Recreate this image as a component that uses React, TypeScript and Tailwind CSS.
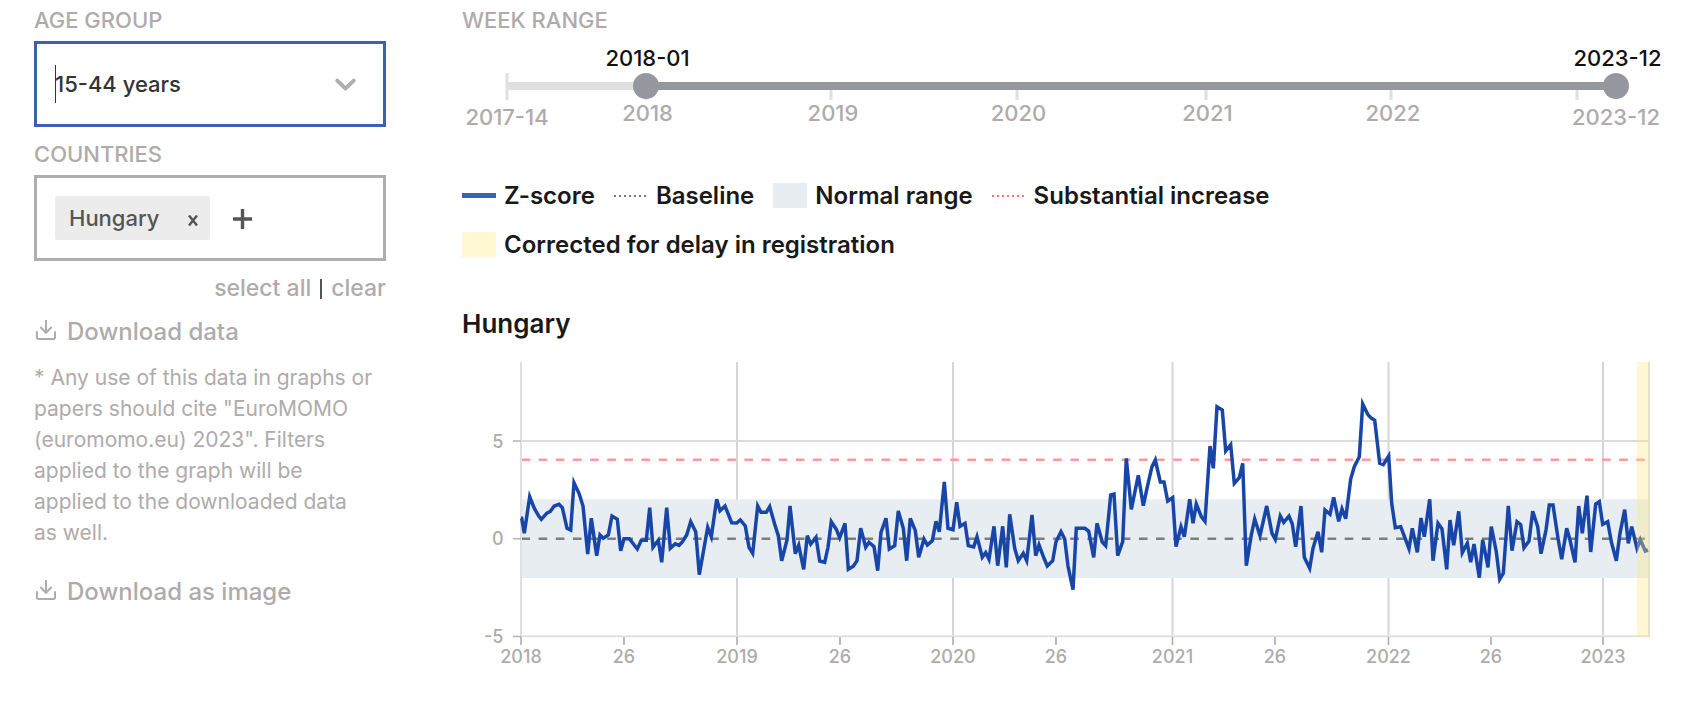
import { useState } from "react";

type Segment = { ox: number; oy: number; points: [number, number][] };

const LAST_WEEK = 311;

const yearTicks = [
  { label: "2018", week: 39 },
  { label: "2019", week: 91 },
  { label: "2020", week: 143 },
  { label: "2021", week: 196 },
  { label: "2022", week: 248 },
  { label: "", week: 300 },
];

// Each segment has its own origin; points are in thirds of a chart unit.
const segments: Segment[] = [
  {
    ox: 48,
    oy: 110,
    points: [
      [33, 175], [35, 175], [43, 220], [59, 110], [72, 143], [86, 168], [94, 178], [110, 160], [121, 154], [133, 138],
      [147, 133], [157, 143], [171, 205], [182, 210], [192, 68], [207, 100], [219, 138], [233, 282], [244, 175],
      [260, 287], [270, 225], [280, 235], [295, 225], [306, 168], [322, 178], [332, 272], [342, 236], [358, 236],
      [382, 267], [394, 241], [409, 241], [419, 143], [429, 262], [445, 241], [455, 307], [470, 143], [481, 265],
      [496, 251], [507, 256], [517, 246], [530, 225], [542, 185], [557, 215], [568, 344],
    ],
  },
  {
    ox: 238,
    oy: 90,
    points: [
      [23, 262], [34, 290], [50, 178], [60, 212], [75, 198], [95, 248], [110, 249], [121, 240], [136, 258],
      [147, 322], [158, 340], [173, 198], [183, 217], [199, 217], [209, 200], [224, 253], [235, 287], [245, 362],
      [261, 300], [270, 198], [286, 341], [296, 316], [311, 388], [322, 287], [332, 312], [348, 292], [359, 363],
      [374, 367], [384, 322], [394, 245], [409, 268], [419, 293], [435, 250], [445, 388], [460, 379], [471, 362],
      [482, 265], [497, 322], [507, 307], [522, 320], [533, 392], [543, 277], [558, 235], [568, 327], [584, 317],
      [595, 213], [610, 265], [620, 362], [631, 235], [646, 272], [656, 352], [672, 297], [682, 315], [697, 302],
    ],
  },
  {
    ox: 468,
    oy: 90,
    points: [
      [18, 244], [28, 275], [43, 126], [54, 265], [69, 269], [80, 187], [90, 259], [105, 250], [115, 317],
      [131, 321], [141, 290], [157, 352], [167, 338], [177, 358], [192, 259], [203, 377], [218, 259], [229, 382],
      [239, 223], [254, 325], [265, 362], [280, 340], [290, 362], [306, 225], [317, 347], [327, 315], [342, 355],
      [352, 378], [368, 362], [378, 305], [393, 275], [404, 297], [414, 378], [429, 449], [439, 265], [465, 265],
      [476, 274], [491, 352], [501, 250], [517, 306], [527, 317], [542, 165], [552, 162], [563, 347], [578, 305],
      [589, 55], [604, 208], [625, 106], [640, 197], [655, 127], [666, 80], [676, 60], [691, 126], [702, 126],
      [713, 183], [728, 173],
    ],
  },
  {
    ox: 648,
    oy: 30,
    points: [
      [198, 500], [213, 440], [223, 470], [239, 358], [249, 430], [259, 372], [274, 410], [285, 424], [300, 198],
      [310, 265], [321, 80], [337, 90], [347, 213], [362, 194], [373, 310], [388, 293], [398, 250], [409, 557],
      [424, 465], [434, 417], [450, 467], [470, 378], [486, 460], [496, 478], [511, 408], [521, 427], [537, 408],
      [547, 432], [557, 500], [573, 378], [583, 532], [599, 565], [609, 505], [624, 455], [635, 517], [645, 390],
      [660, 403], [671, 352], [686, 424],
    ],
  },
  {
    ox: 838,
    oy: 30,
    points: [
      [126, 387], [137, 416], [152, 297], [163, 260], [178, 230], [188, 72], [203, 103], [213, 114], [224, 121],
      [239, 250], [250, 254], [266, 228], [275, 370], [286, 443], [302, 440], [327, 506], [337, 445], [352, 517],
      [363, 414], [373, 470], [389, 358], [399, 542], [414, 430], [426, 447], [440, 568], [450, 420], [461, 496],
      [476, 394], [487, 518], [502, 490], [512, 547], [522, 492], [538, 593], [548, 480], [564, 562], [574, 440],
      [589, 515], [599, 598], [610, 580], [625, 378], [636, 512], [651, 425],
    ],
  },
  {
    ox: 998,
    oy: 0,
    points: [
      [182, 524], [192, 593], [207, 573], [218, 484], [233, 530], [243, 611], [258, 540], [268, 465], [279, 465],
      [294, 565], [305, 628], [320, 535], [330, 570], [345, 637], [356, 468], [367, 550], [381, 437], [392, 606],
      [407, 462], [418, 455], [428, 523], [443, 515], [454, 575], [469, 632], [480, 550], [494, 479], [505, 580],
      [515, 530], [531, 595], [541, 569], [556, 603], [564, 600],
    ],
  },
];

const linePoints = segments
  .flatMap((s) => s.points.map(([x, y]) => `${(s.ox + x / 3).toFixed(1)},${(s.oy + y / 3).toFixed(1)}`))
  .join(" ");

const xTicks = [
  { x: 59, label: "2018", year: true },
  { x: 162, label: "26", year: false },
  { x: 275, label: "2019", year: true },
  { x: 378, label: "26", year: false },
  { x: 491, label: "2020", year: true },
  { x: 594, label: "26", year: false },
  { x: 710.5, label: "2021", year: true },
  { x: 813, label: "26", year: false },
  { x: 926.5, label: "2022", year: true },
  { x: 1029, label: "26", year: false },
  { x: 1141, label: "2023", year: true },
];

const yTicks = [
  { y: 91, label: "5" },
  { y: 188.7, label: "0" },
  { y: 286.5, label: "-5" },
];

function DownloadIcon() {
  return (
    <svg viewBox="0 0 22 22" className="mb-1 size-[22px] shrink-0" fill="none" stroke="currentColor" strokeWidth="2" aria-hidden="true">
      <path d="M12 1v12.6M6.4 8l5.6 5.7L17.6 8" />
      <path d="M2.9 12.2v6q0 1.7 1.7 1.7h14.8q1.7 0 1.7-1.7v-6" />
    </svg>
  );
}

function Chart() {
  return (
    <svg viewBox="0 0 1200 330" className="block h-auto w-full" role="img" aria-label="Z-score by week, Hungary">
      <g stroke="#d6d6d6" strokeWidth="2">
        {xTicks.filter((t) => t.year && t.x > 59).map((t) => (
          <line key={t.x} x1={t.x} x2={t.x} y1="12" y2="286" />
        ))}
        <line x1="59" x2="1187" y1="91" y2="91" stroke="#dcdcdc" />
      </g>
      <rect x="59" y="149.3" width="1128" height="78.7" fill="#e8edf1" />
      <line x1="59.5" x2="1187" y1="109.7" y2="109.7" stroke="#ff9999" strokeWidth="2.6" strokeDasharray="8.6 8.55" />
      <line x1="59.5" x2="1187" y1="188.7" y2="188.7" stroke="#7d7d7d" strokeWidth="2.6" strokeDasharray="8.6 8.55" />
      <g stroke="#e0e0e0" strokeWidth="2">
        <line x1="59" x2="59" y1="12" y2="287" />
        <line x1="1187" x2="1187" y1="12" y2="287" />
        <line x1="58" x2="1188" y1="286.3" y2="286.3" />
      </g>
      <polyline points={linePoints} fill="none" stroke="#1746a8" strokeWidth="3.5" />
      <rect x="1175" y="12" width="12.5" height="275" fill="#ffe87e" fillOpacity="0.35" />
      <g className="font-medium" fontSize="18" fill="#afabab">
        {yTicks.map((t) => (
          <g key={t.label}>
            <line x1="51" x2="59" y1={t.y} y2={t.y} stroke="#bbb8b8" strokeWidth="1.6" />
            <text x="41.5" y={t.y + 6.5} textAnchor="end">{t.label}</text>
          </g>
        ))}
        {xTicks.map((t) => (
          <g key={t.x}>
            <line x1={t.x} x2={t.x} y1="287" y2="295" stroke="#afabab" strokeWidth="1.6" />
            <text x={t.x} y="313" textAnchor="middle">{t.label}</text>
          </g>
        ))}
      </g>
    </svg>
  );
}

const rangeInput =
  "pointer-events-none absolute top-[37px] -left-[13px] m-0 h-[26px] w-[calc(100%+26px)] appearance-none bg-transparent outline-none [&::-webkit-slider-thumb]:pointer-events-auto [&::-webkit-slider-thumb]:size-[26px] [&::-webkit-slider-thumb]:appearance-none [&::-webkit-slider-thumb]:rounded-full [&::-webkit-slider-thumb]:bg-[#95979e]";

const percent = (week: number) => `${(week / LAST_WEEK) * 100}%`;

const weekLabel = (week: number) => {
  const starts = [[2017, -13], [2018, 39], [2019, 91], [2020, 143], [2021, 196], [2022, 248], [2023, 300]];
  const [year, start] = starts.filter(([, s]) => s <= week).pop()!;
  return `${year}-${String(week - start + 1).padStart(2, "0")}`;
};

function WeekRange() {
  const [from, setFrom] = useState(39);
  const [to, setTo] = useState(LAST_WEEK);
  const bounds = [
    { label: "2017-14", week: 0 },
    { label: "2023-12", week: LAST_WEEK },
  ];
  return (
    <fieldset className="font-medium">
      <legend className="text-[22px] leading-[31px]">WEEK RANGE</legend>
      <div className="relative mr-[46px] ml-[45px] h-[106px] whitespace-nowrap">
        <div className="absolute top-[37px] left-0 h-[27px] w-[3px] -translate-x-1/2 bg-[#e0e0e0]" />
        {yearTicks.map((t) => (
          <div key={t.week} className="absolute top-[54px] h-[10px] w-[3px] -translate-x-1/2 bg-[#e0e0e0]" style={{ left: percent(t.week) }} />
        ))}
        <div className="absolute inset-x-0 top-[46px] h-2 bg-[#e0e0e0]" />
        <div className="absolute top-[46px] h-2 bg-[#95979e]" style={{ left: percent(from), width: percent(to - from) }} />
        {[from, to].map((w, i) => (
          <span key={i} className="absolute top-[7px] -translate-x-1/2 pl-[3px] text-[22px] leading-[31px] text-[#111]" style={{ left: percent(w) }}>
            {weekLabel(w)}
          </span>
        ))}
        {yearTicks.map((t) => (
          <span key={t.week} className="absolute top-[62px] -translate-x-1/2 pl-[3px] text-[22px] leading-[31px]" style={{ left: percent(t.week) }}>
            {t.label}
          </span>
        ))}
        {bounds.map((b) => (
          <span key={b.label} className="absolute top-[66px] -translate-x-1/2 text-[22px] leading-[31px]" style={{ left: percent(b.week) }}>
            {b.label}
          </span>
        ))}
        <input type="range" aria-label="First week" min={0} max={LAST_WEEK} value={from} onChange={(e) => setFrom(Math.min(+e.target.value, to))} className={rangeInput} />
        <input type="range" aria-label="Last week" min={0} max={LAST_WEEK} value={to} onChange={(e) => setTo(Math.max(+e.target.value, from))} className={rangeInput} />
      </div>
    </fieldset>
  );
}

const legend = [
  { label: "Z-score", swatch: "h-[5px] bg-[#3d5fb8]" },
  { label: "Baseline", swatch: "h-0.5 bg-[repeating-linear-gradient(90deg,#777_0_2px,transparent_2px_5px)]" },
  { label: "Normal range", swatch: "h-[25px] bg-[#e8edf1]" },
  { label: "Substantial increase", swatch: "h-0.5 bg-[repeating-linear-gradient(90deg,#ff7373_0_2px,transparent_2px_5px)]" },
  { label: "Corrected for delay in registration", swatch: "h-[25px] bg-[#fff8d2]" },
];

export default function App() {
  return (
    <div className="flex bg-white pt-[5px] pr-11 pl-[34px] font-['Inter',sans-serif] text-[#afabab]">
      <aside className="w-[352px] shrink-0">
        <label htmlFor="age" className="block text-[22px] leading-[31px] font-medium">AGE GROUP</label>
        <div className="relative mt-[5px]">
          <select id="age" defaultValue="15-44 years" className="block h-[86px] w-full appearance-none border-3 border-[#3d5fb8] bg-white px-[18px] text-[22px] font-medium text-[#333] outline-none">
            <option>0-14 years</option>
            <option>15-44 years</option>
            <option>45-64 years</option>
          </select>
          <span className="pointer-events-none absolute top-6 left-[21px] h-[38px] w-px bg-[#333]" />
          <svg viewBox="0 0 20 20" className="pointer-events-none absolute top-[25px] right-[23px] size-[35px] fill-[#afafaf]" aria-hidden="true">
            <path d="M4.516 7.548c0.436-0.446 1.043-0.481 1.576 0l3.908 3.747 3.908-3.747c0.533-0.481 1.141-0.446 1.574 0 0.436 0.445 0.408 1.197 0 1.615-0.406 0.418-4.695 4.502-4.695 4.502-0.217 0.223-0.502 0.335-0.787 0.335s-0.57-0.112-0.789-0.335c0 0-4.287-4.084-4.695-4.502s-0.436-1.17 0-1.615z" />
          </svg>
        </div>

        <h2 className="mt-3 text-[22px] leading-[31px] font-medium">COUNTRIES</h2>
        <div className="mt-[5px] flex h-[86px] items-center border-3 border-[#afafaf] px-[18px] text-[#555]">
          <div className="flex h-11 w-[155px] items-center justify-between rounded-xs bg-[#ececec] pr-3 pl-3.5 font-medium">
            <span className="text-[22px]">Hungary</span>
            <button type="button" aria-label="Remove Hungary" className="pt-1">
              <svg viewBox="0 0 10 11" className="h-[11px] w-2.5" fill="none" stroke="currentColor" strokeWidth="2.4" aria-hidden="true">
                <path d="M1 .5l8 10M9 .5l-8 10" />
              </svg>
            </button>
          </div>
          <button type="button" aria-label="Add country" className="ml-[23px] pt-0.5">
            <svg viewBox="0 0 19 20" className="h-5 w-[19px]" fill="none" stroke="currentColor" strokeWidth="3.4" aria-hidden="true">
              <path d="M9.5 0v20M0 10h19" />
            </svg>
          </button>
        </div>

        <div className="mt-3 flex items-center justify-end gap-[9px] text-[23px] leading-[31px] font-medium">
          <button type="button">select all</button>
          <span className="h-5 w-0.5 bg-[#555]" />
          <button type="button">clear</button>
        </div>

        <a href="#data" className="mt-3 flex items-center gap-[11px] text-2xl leading-[31px] font-medium">
          <DownloadIcon />
          Download data
        </a>
        <p className="mt-[15px] pr-2 text-[21px] leading-[31px]">
          * Any use of this data in graphs or papers should cite "EuroMOMO (euromomo.eu) 2023". Filters applied to the graph will be applied to the downloaded data as&nbsp;well.
        </p>
        <a href="#image" className="mt-7 flex items-center gap-[11px] text-2xl leading-[31px] font-medium">
          <DownloadIcon />
          Download as image
        </a>
      </aside>

      <main className="ml-[76px] min-w-0 flex-1">
        <WeekRange />
        <ul className="mt-[38px] flex max-w-[900px] flex-wrap gap-x-[19px] gap-y-[18px] text-2xl leading-[31px] font-semibold text-[#191919]">
          {legend.map((item) => (
            <li key={item.label} className="flex items-center gap-2">
              <span className={`w-[34px] ${item.swatch}`} />
              {item.label}
            </li>
          ))}
        </ul>
        <h1 className="mt-12 mb-2.5 text-[26px] leading-8 font-semibold text-[#191919]">Hungary</h1>
        <Chart />
      </main>
    </div>
  );
}
